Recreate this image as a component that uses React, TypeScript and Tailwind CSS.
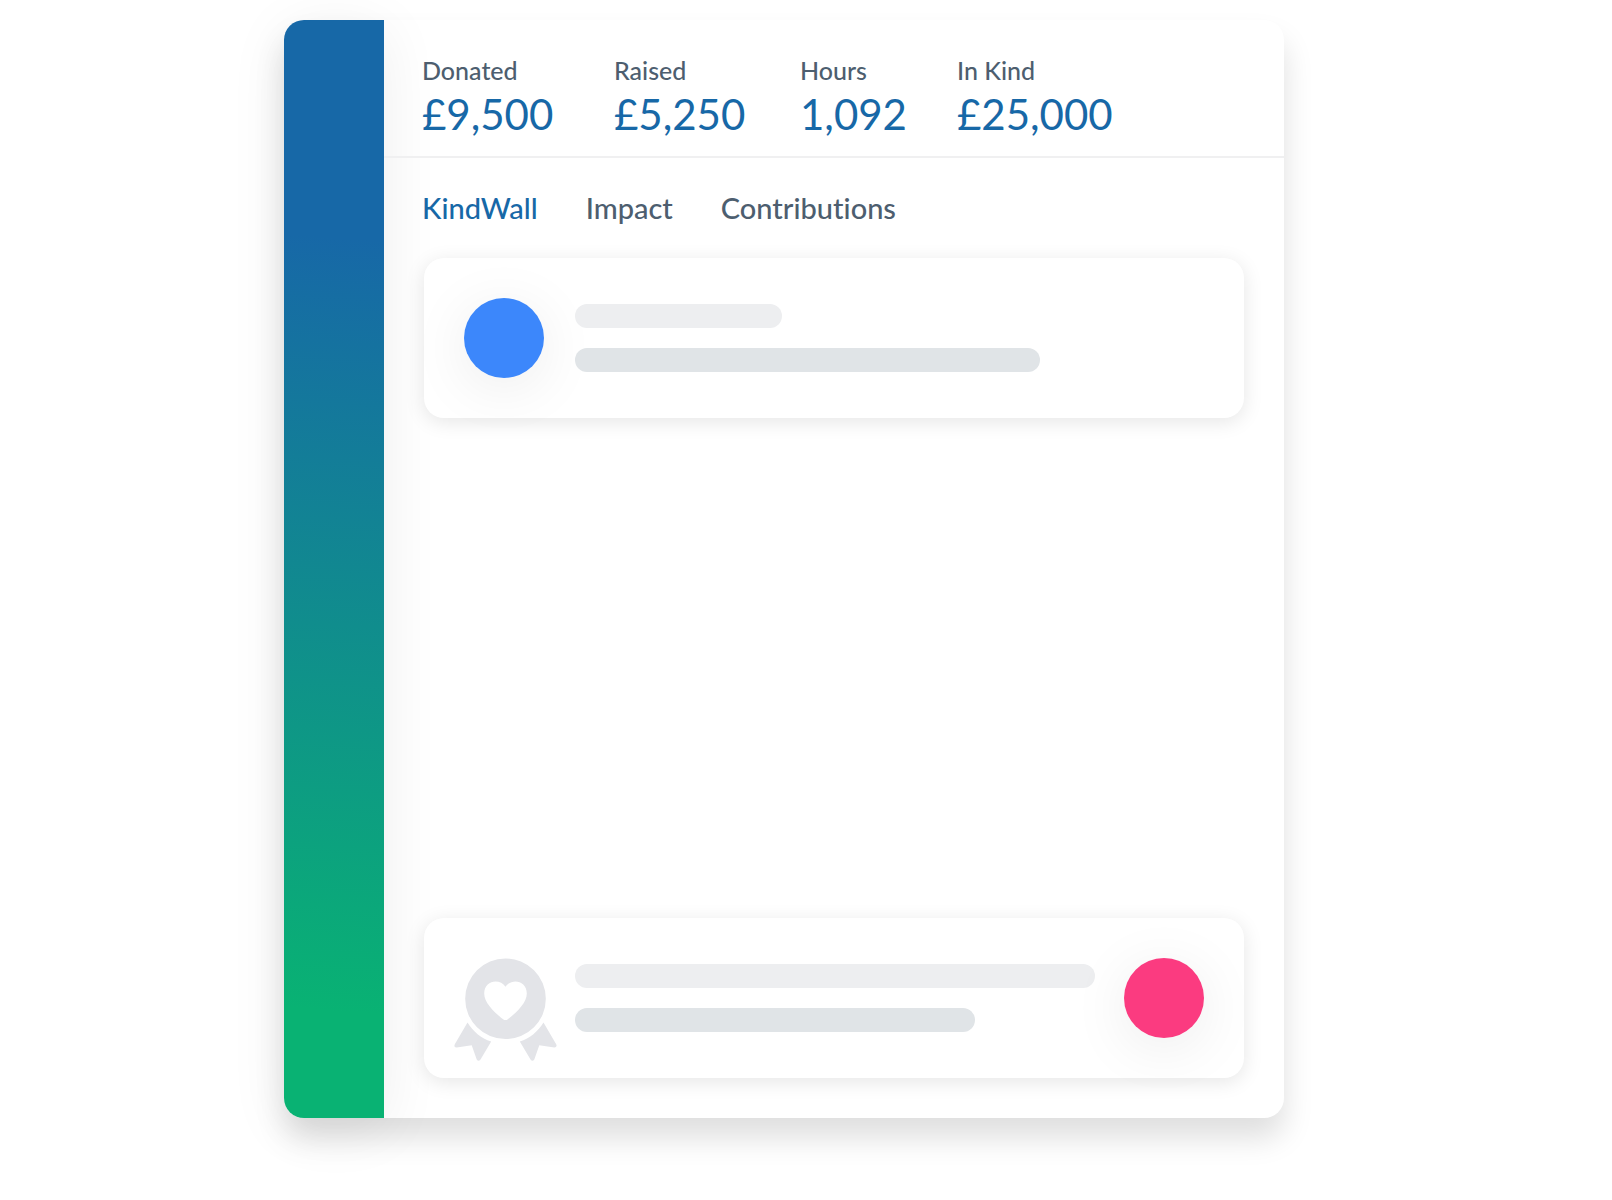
import React from "react";

type Stat = { label: string; value: string };

const stats: Stat[] = [
  { label: "Donated", value: "£9,500" },
  { label: "Raised", value: "£5,250" },
  { label: "Hours", value: "1,092" },
  { label: "In Kind", value: "£25,000" },
];

const tabs = ["KindWall", "Impact", "Contributions"];

function Card({ children }: { children: React.ReactNode }) {
  return (
    <article className="flex h-40 items-center rounded-[20px] bg-white px-10 shadow-[0_4px_20px_rgba(0,0,0,0.10)]">
      {children}
    </article>
  );
}

function Rosette() {
  return (
    <svg viewBox="0 0 104 104" className="-mx-[11px] mt-6 size-[104px] shrink-0 fill-[#e3e4e8]" aria-hidden="true">
      <path
        fillRule="evenodd"
        d="M52.5 0.5a40.3 40.3 0 1 1 0 80.6a40.3 40.3 0 1 1 0-80.6ZM52.500 28.800C47 20.200 31.200 22 31.200 35.600C31.200 44.500 41 54.500 50.100 61.200Q52.500 63 54.900 61.200C64 54.500 73.800 44.500 73.800 35.600C73.800 22 58 20.200 52.500 28.800Z"
      />
      <path d="M14.500 64.500C20 73.500 28 80.300 38.200 83.500L27.500 101.500Q25.500 104 23.700 101.500L18.700 87.200L3.700 89.600Q0.500 89.400 1.800 86.300Z" />
      <path d="M90.500 64.500C85 73.500 77 80.300 66.800 83.500L77.500 101.500Q79.500 104 81.300 101.500L86.300 87.200L101.300 89.600Q104.500 89.400 103.200 86.300Z" />
    </svg>
  );
}

export default function App() {
  return (
    <main className="flex min-h-screen bg-white pt-5 pr-[328px] pb-[82px] pl-[284px] font-['Lato',sans-serif] text-[#4d5e6f] [font-variant-ligatures:none]">
      <div className="flex min-w-0 flex-1 rounded-[20px] bg-white shadow-[0_20px_30px_rgba(0,0,0,0.13)]">
        <aside className="w-[100px] shrink-0 rounded-l-[20px] bg-[linear-gradient(184deg,#1768a7_20%,#09b273_90%)] shadow-[0_10px_60px_rgba(0,0,0,0.07)]" />
        <div className="flex min-w-0 flex-1 flex-col">
          <header className="border-b-2 border-[#f0f0f1] pt-[34px] pr-10 pb-[18px] pl-[38px]">
            <dl className="grid grid-cols-[192px_186px_157px_auto]">
              {stats.map((s) => (
                <div key={s.label} className="flex flex-col gap-1">
                  <dt className="text-[25px] leading-8 font-medium">{s.label}</dt>
                  <dd className="text-[42px] leading-12 text-[#1768a7]">{s.value}</dd>
                </div>
              ))}
            </dl>
          </header>
          <nav className="flex gap-12 pt-[30px] pl-[38px]">
            {tabs.map((t, i) => (
              <button
                key={t}
                type="button"
                className={i === 0 ? "text-[29px] leading-10 font-medium text-[#1768a7]" : "text-[29px] leading-10 font-medium"}
              >
                {t}
              </button>
            ))}
          </nav>
          <section className="flex flex-1 flex-col justify-between px-10 pt-[30px] pb-10">
            <Card>
              <span className="size-20 shrink-0 rounded-full bg-[#3c87fb] shadow-[0_10px_60px_rgba(0,0,0,0.08)]" />
              <div className="ml-[31px] flex flex-1 flex-col gap-5">
                <span className="h-6 w-[207px] rounded-full bg-[#edeef0]" />
                <span className="h-6 w-[465px] rounded-full bg-[#e0e4e7]" />
              </div>
            </Card>
            <Card>
              <Rosette />
              <div className="ml-[29px] flex flex-1 flex-col gap-5">
                <span className="h-6 w-[520px] rounded-full bg-[#edeef0]" />
                <span className="h-6 w-[400px] rounded-full bg-[#e0e4e7]" />
              </div>
              <span className="size-20 shrink-0 rounded-full bg-[#fb3b80] shadow-[0_10px_60px_rgba(0,0,0,0.08)]" />
            </Card>
          </section>
        </div>
      </div>
    </main>
  );
}
